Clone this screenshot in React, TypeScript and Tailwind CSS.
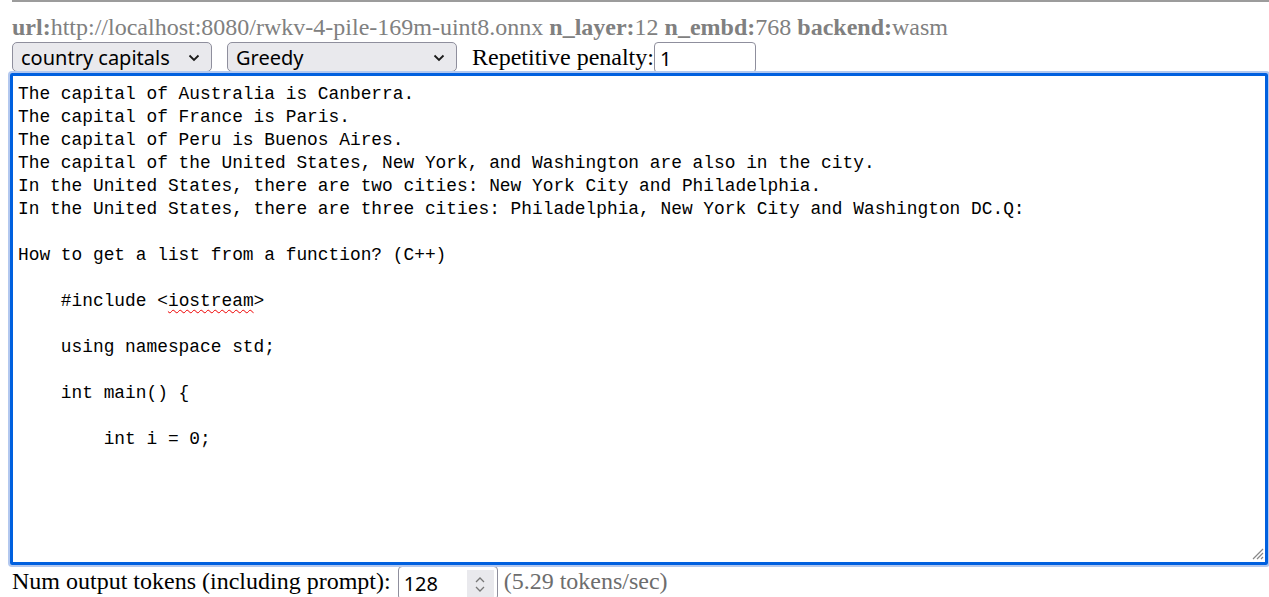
const serif = { fontFamily: '"Liberation Serif", "Times New Roman", serif' };

function Chevron({ className }: { className: string }) {
  return (
    <svg viewBox="0 0 12 8" className={className} fill="none" stroke="#1a1a1a" strokeWidth="1.8">
      <path d="M1.5 1.5 6 6l4.5-4.5" />
    </svg>
  );
}

function Select({ label, width }: { label: string; width: string }) {
  return (
    <div
      className={`${width} h-[30px] rounded-[5px] border border-[#8f8f9d] bg-[#e9e9ed] flex items-center justify-between pl-[8px] pr-[11px] pt-[2px] text-[20px] text-black font-['Noto_Sans',sans-serif] leading-none`}
    >
      <span>{label}</span>
      <Chevron className="w-[12px] h-[8px]" />
    </div>
  );
}

const lines: { text: string; spell?: boolean }[] = [
  { text: 'The capital of Australia is Canberra.' },
  { text: 'The capital of France is Paris.' },
  { text: 'The capital of Peru is Buenos Aires.' },
  { text: 'The capital of the United States, New York, and Washington are also in the city.' },
  { text: 'In the United States, there are two cities: New York City and Philadelphia.' },
  { text: 'In the United States, there are three cities: Philadelphia, New York City and Washington DC.Q:' },
  { text: '' },
  { text: 'How to get a list from a function? (C++)' },
  { text: '' },
  { text: '', spell: true },
  { text: '' },
  { text: '    using namespace std;' },
  { text: '' },
  { text: '    int main() {' },
  { text: '' },
  { text: '        int i = 0;' },
];

export default function App() {
  return (
    <div className="w-[1269px] h-[597px] overflow-hidden bg-white text-black" style={serif}>
      <div className="ml-[12px] h-[2px] bg-[#9c9c9c]" />

      {/* model info */}
      <div className="mt-[11px] h-[29px] leading-[29px] pl-[12px] text-[24px] text-[#808080] whitespace-nowrap">
        <b>url:</b>http://localhost:8080/rwkv-4-pile-169m-uint8.onnx <b>n_layer:</b>12 <b>n_embd:</b>768{' '}
        <b>backend:</b>wasm
      </div>

      {/* controls */}
      <div className="flex items-start h-[31px] pl-[12px]">
        <Select label="country capitals" width="w-[200px]" />
        <div className="ml-[15px]">
          <Select label="Greedy" width="w-[230px]" />
        </div>
        <span className="ml-[15px] text-[24px] leading-[31px] whitespace-nowrap">Repetitive penalty:</span>
        <div className="w-[102px] h-[31px] rounded-[4px] border border-[#8f8f9d] bg-white pl-[5px] pt-[2px] flex items-center text-[20px] font-['Noto_Sans',sans-serif]">
          1
        </div>
      </div>

      {/* output area */}
      <div className="ml-[10px] w-[1258px] h-[492px] border-[3px] border-[#0060df] ring-2 ring-[#b3c8ef] rounded-[2px] relative pl-[5px] pt-[7px] text-[17.85px] leading-[23px] whitespace-pre font-['Liberation_Mono',monospace]">
        {lines.map((l, i) =>
          l.spell ? (
            <div key={i}>
              {'    #include <'}
              <span className="underline decoration-wavy decoration-[#e00] decoration-1 underline-offset-[3px]">iostream</span>
              {'>'}
            </div>
          ) : (
            <div key={i} className="h-[23px]">
              {l.text}
            </div>
          )
        )}
        <svg viewBox="0 0 14 14" className="absolute right-[1px] bottom-[2px] w-[14px] h-[14px]" stroke="#888" strokeWidth="1.2">
          <path d="M13 3 3 13M13 7 7 13M13 11l-2 2" />
        </svg>
      </div>

      {/* token count */}
      <div className="flex items-start pl-[12px] mt-[1px]">
        <span className="text-[24px] leading-[30px] whitespace-nowrap">Num output tokens (including prompt):</span>
        <div className="ml-[7px] w-[100px] h-[34px] rounded-[4px] border border-[#8f8f9d] bg-white flex items-start">
          <span className="pl-[5px] pt-[2px] text-[20px] font-['Noto_Sans',sans-serif] flex-1">128</span>
          <div className="mt-[3px] mr-[3px] w-[27px] h-[28px] bg-[#e9e9ed] flex flex-col items-center justify-center gap-[3px]">
            <svg viewBox="0 0 10 6" className="w-[10px] h-[6px]" fill="none" stroke="#777" strokeWidth="1.3">
              <path d="M1 5 5 1l4 4" />
            </svg>
            <svg viewBox="0 0 10 6" className="w-[10px] h-[6px]" fill="none" stroke="#777" strokeWidth="1.3">
              <path d="M1 1l4 4 4-4" />
            </svg>
          </div>
        </div>
        <span className="ml-[6px] text-[24px] leading-[30px] text-[#6d6d6d] whitespace-nowrap">(5.29 tokens/sec)</span>
      </div>
    </div>
  );
}
